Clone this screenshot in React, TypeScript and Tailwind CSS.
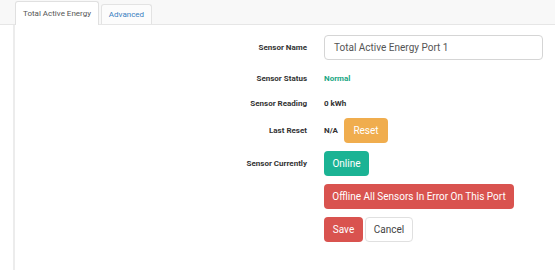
import React from "react";

const font = { fontFamily: "Roboto, 'Liberation Sans', sans-serif" };

function Row({ label, children, className = "" }: { label: string; children: React.ReactNode; className?: string }) {
  return (
    <div className={`flex items-center ${className}`}>
      <div className="w-[292px] shrink-0 text-right text-[8px] font-bold text-[#333] whitespace-nowrap">{label}</div>
      <div className="ml-[17px] flex items-center">{children}</div>
    </div>
  );
}

export default function App() {
  return (
    <div className="w-[555px] h-[270px] bg-white overflow-hidden" style={font}>
      <div className="h-[25px] bg-[#f8f8f8] border-b border-[#e6e6e6] flex items-end pl-[15px] gap-[2px]">
        <div className="h-[24px] px-[8px] bg-white border border-b-0 border-[#e0e0e0] rounded-t-[3px] flex items-center justify-center whitespace-nowrap text-[8px] text-[#555] -mb-px w-[84px]">
          Total Active Energy
        </div>
        <div className="h-[20px] px-[6px] bg-[#fcfcfc] border border-b-0 border-[#e3e3e3] rounded-t-[3px] flex items-center justify-center whitespace-nowrap text-[8px] text-[#3a7fc1] w-[51px]">
          Advanced
        </div>
      </div>
      <div className="ml-[13px] border-l-2 border-[#ececec] h-[245px] pt-[10px]">
        <Row label="Sensor Name" className="h-[25px]">
          <div className="w-[219px] h-[25px] border border-[#d5d5d5] rounded-[4px] flex items-center px-[9px] text-[10px] text-[#555] whitespace-nowrap">
            Total Active Energy Port 1
          </div>
        </Row>
        <Row label="Sensor Status" className="h-[24px] mt-[7px]">
          <span className="text-[8px] font-bold text-[#1ba784]">Normal</span>
        </Row>
        <Row label="Sensor Reading" className="h-[24px] mt-[1px]">
          <span className="text-[8px] font-bold text-[#333]">0 kWh</span>
        </Row>
        <Row label="Last Reset" className="h-[25px] mt-[2px]">
          <span className="text-[8px] font-bold text-[#333] w-[20px]">N/A</span>
          <button className="h-[25px] w-[44px] rounded-[4px] bg-[#f0ad4e] text-white text-[10px] flex items-center justify-center">Reset</button>
        </Row>
        <Row label="Sensor Currently" className="h-[25px] mt-[8px]">
          <button className="h-[25px] w-[45px] rounded-[4px] bg-[#1bb394] text-white text-[10px] flex items-center justify-center">Online</button>
        </Row>
        <Row label="" className="h-[25px] mt-[8px]">
          <button className="h-[25px] w-[190px] rounded-[4px] bg-[#d9534f] text-white text-[10px] flex items-center justify-center whitespace-nowrap">Offline All Sensors In Error On This Port</button>
        </Row>
        <Row label="" className="h-[25px] mt-[8px]">
          <button className="h-[25px] w-[39px] rounded-[4px] bg-[#d9534f] text-white text-[10px] flex items-center justify-center">Save</button>
          <button className="ml-[2px] h-[25px] w-[48px] rounded-[4px] bg-white border border-[#e0e0e0] text-[#444] text-[10px] flex items-center justify-center">Cancel</button>
        </Row>
      </div>
    </div>
  );
}
